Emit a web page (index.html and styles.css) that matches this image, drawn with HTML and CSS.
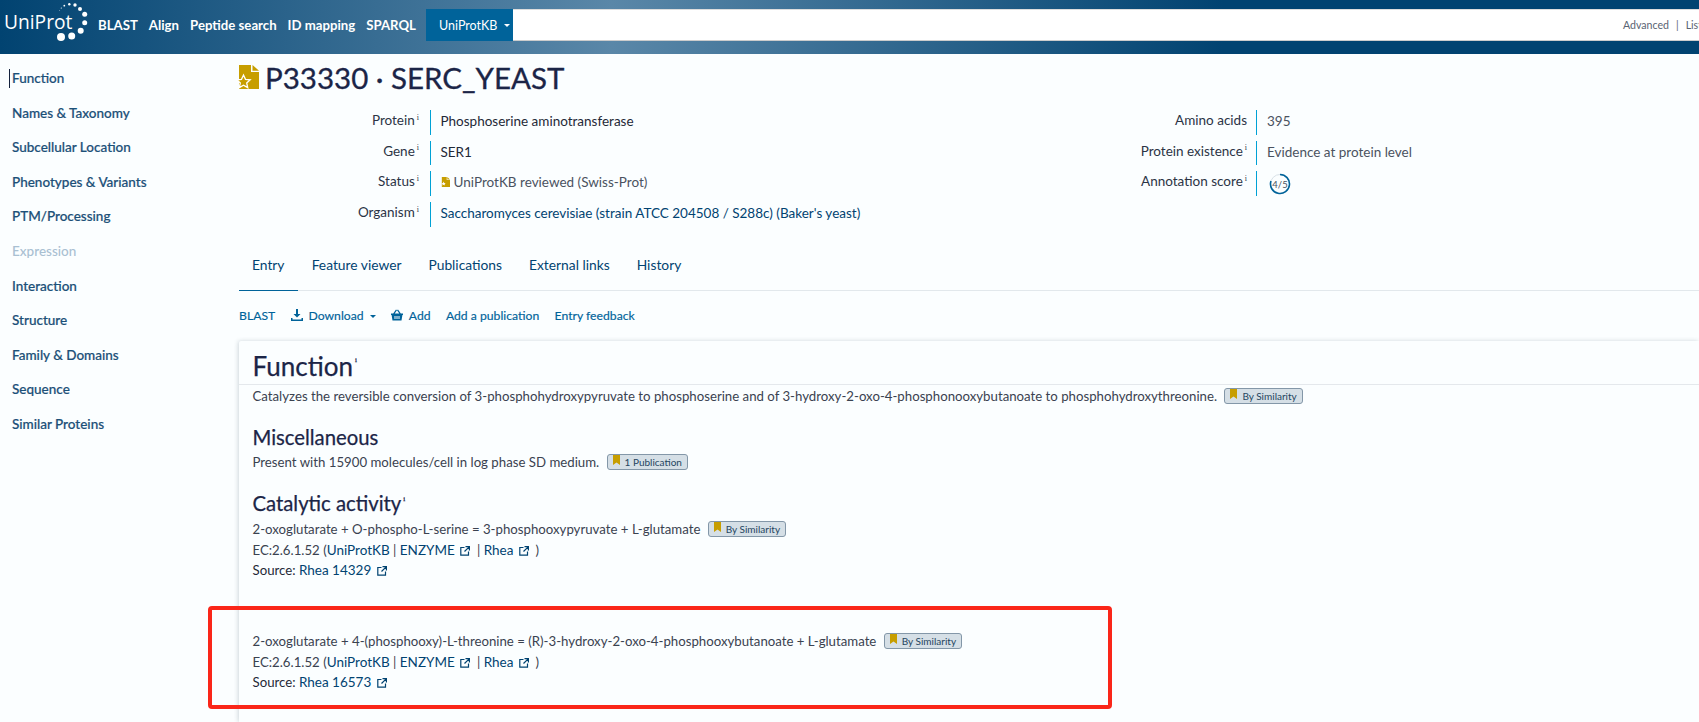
FILE: index.html
```html
<!DOCTYPE html>
<html lang="en">
<head>
<meta charset="utf-8">
<title>P33330 · SERC_YEAST</title>
<link rel="stylesheet" href="styles.css">
</head>
<body>
<header class="topbar">
  <a class="logo" href="#">
    <svg width="90" height="44" viewBox="0 0 90 44">
      <text x="4" y="28.500" class="logo-text">UniProt</text>
      <g fill="#fff">
        <circle cx="61" cy="37" r="4"/><circle cx="71.7" cy="36" r="3.500"/><circle cx="80.7" cy="30.700" r="3"/>
        <circle cx="84.7" cy="22.700" r="2.500"/><circle cx="84.7" cy="14.300" r="2.500"/><circle cx="80" cy="9" r="2"/>
        <circle cx="75" cy="5" r="1.700"/><circle cx="69.3" cy="4.300" r="1.200"/><circle cx="64.3" cy="5.700" r="0.900"/>
        <circle cx="61.3" cy="8" r="0.600"/><circle cx="59.7" cy="10.700" r="0.400"/>
      </g>
    </svg>
  </a>
  <nav class="topnav">
    <a href="#">BLAST</a><a href="#">Align</a><a href="#">Peptide search</a><a href="#">ID mapping</a><a href="#">SPARQL</a>
  </nav>
  <div class="search">
    <span class="search-select">UniProtKB<i class="caret caret-white"></i></span>
    <div class="search-input"><span>Advanced</span><span class="sep">|</span><span>List</span></div>
  </div>
</header>

<div class="page">
  <aside class="sidebar">
    <a class="side-link active" href="#">Function</a>
    <a class="side-link" href="#">Names &amp; Taxonomy</a>
    <a class="side-link" href="#">Subcellular Location</a>
    <a class="side-link" href="#">Phenotypes &amp; Variants</a>
    <a class="side-link" href="#">PTM/Processing</a>
    <a class="side-link disabled" href="#">Expression</a>
    <a class="side-link" href="#">Interaction</a>
    <a class="side-link" href="#">Structure</a>
    <a class="side-link" href="#">Family &amp; Domains</a>
    <a class="side-link" href="#">Sequence</a>
    <a class="side-link" href="#">Similar Proteins</a>
  </aside>

  <main class="main">
    <h1 class="title">
      <svg class="doc-icon" viewBox="0 0 22 24">
        <path fill="#c79e00" d="M2 0h12v7h8v17H2z"/><path fill="#c79e00" d="M15.500 0L22 5.800h-6.500z"/>
        <path fill="#c79e00" stroke="#fff" stroke-width="1.300" d="M6.500 10l2 4.300 4.700.5-3.500 3.200 1 4.600-4.200-2.400-4.200 2.400 1-4.600L-.200 14.800l4.700-.5z"/>
      </svg>
      P33330 · SERC_YEAST
    </h1>

    <section class="summary">
      <dl class="info info-left">
        <div class="info-row"><dt>Protein<sup>i</sup></dt><dd>Phosphoserine aminotransferase</dd></div>
        <div class="info-row"><dt>Gene<sup>i</sup></dt><dd>SER1</dd></div>
        <div class="info-row"><dt>Status<sup>i</sup></dt><dd class="muted"><svg class="doc-small" viewBox="0 0 22 24"><path fill="#c79e00" d="M2 0h12v7h8v17H2z"/><path fill="#c79e00" d="M15.500 0L22 5.800h-6.500z"/><path fill="#fff" d="M6.500 11l1.500 3.300 3.600.4-2.700 2.400.8 3.500-3.200-1.800-3.200 1.800.8-3.500-2.700-2.400 3.600-.4z"/></svg>UniProtKB reviewed (Swiss-Prot)</dd></div>
        <div class="info-row"><dt>Organism<sup>i</sup></dt><dd><a href="#">Saccharomyces cerevisiae (strain ATCC 204508 / S288c) (Baker's yeast)</a></dd></div>
      </dl>
      <dl class="info info-right">
        <div class="info-row"><dt>Amino acids</dt><dd class="muted">395</dd></div>
        <div class="info-row"><dt>Protein existence<sup>i</sup></dt><dd class="muted">Evidence at protein level</dd></div>
        <div class="info-row"><dt>Annotation score<sup>i</sup></dt><dd>
          <span class="score"><svg viewBox="0 0 22 22" width="22" height="22"><circle cx="11" cy="11" r="9.500" fill="none" stroke="#d9e2e8" stroke-width="1"/><path d="M11 1.500A9.500 9.500 0 1 1 1.960 8.060" fill="none" stroke="#00639a" stroke-width="1.600"/></svg><b>4/5</b></span>
        </dd></div>
      </dl>
    </section>

    <nav class="tabs">
      <a class="tab tab-active" href="#">Entry</a>
      <a class="tab" href="#">Feature viewer</a>
      <a class="tab" href="#">Publications</a>
      <a class="tab" href="#">External links</a>
      <a class="tab" href="#">History</a>
    </nav>

    <div class="actions">
      <a href="#">BLAST</a>
      <a href="#"><svg class="act-icon" viewBox="0 0 12 12"><path fill="#00639a" d="M5 0h2v5h2.500L6 8.500 2.500 5H5zM0 9h1.500v1.500h9V9H12v3H0z"/></svg>Download<i class="caret caret-blue"></i></a>
      <a href="#"><svg class="act-icon" viewBox="0 0 12 12"><path fill="#00639a" d="M0 4.500h2.200L5 .5l1 .7L3.700 4.500h4.600L6 1.200l1-.7 2.800 4H12V6h-.6L10.500 11.500h-9L.6 6H0zM3.500 7v3h1V7zm2 0v3h1V7zm2 0v3h1V7z"/></svg>Add</a>
      <a href="#">Add a publication</a>
      <a href="#">Entry feedback</a>
    </div>

    <article class="card">
      <h2 class="card-title">Function<sup>i</sup></h2>
      <p class="line desc">Catalyzes the reversible conversion of 3-phosphohydroxypyruvate to phosphoserine and of 3-hydroxy-2-oxo-4-phosphonooxybutanoate to phosphohydroxythreonine. <span class="evidence"><svg class="mark" viewBox="0 0 7 10"><path fill="#c79e00" d="M0 0h7v10L3.500 7.500 0 10z"/></svg>By Similarity</span></p>

      <h3 class="sub misc">Miscellaneous</h3>
      <p class="line">Present with 15900 molecules/cell in log phase SD medium. <span class="evidence"><svg class="mark" viewBox="0 0 7 10"><path fill="#c79e00" d="M0 0h7v10L3.500 7.500 0 10z"/></svg>1 Publication</span></p>

      <h3 class="sub cat">Catalytic activity<sup>i</sup></h3>

      <div class="reaction">
        <p class="line">2-oxoglutarate + O-phospho-L-serine = 3-phosphooxypyruvate + L-glutamate <span class="evidence"><svg class="mark" viewBox="0 0 7 10"><path fill="#c79e00" d="M0 0h7v10L3.500 7.500 0 10z"/></svg>By Similarity</span></p>
        <p class="line">EC:2.6.1.52 (<a href="#">UniProtKB</a> | <a href="#">ENZYME</a> <svg class="ext" viewBox="0 0 10 10"><path fill="none" stroke="#014371" stroke-width="1.200" d="M4.500 1.500H.8v7.700h7.700V5.500M5.500.6h3.900v3.900M9.200.8L4.500 5.500"/></svg> &nbsp;| <a href="#">Rhea</a> <svg class="ext" viewBox="0 0 10 10"><path fill="none" stroke="#014371" stroke-width="1.200" d="M4.500 1.500H.8v7.700h7.700V5.500M5.500.6h3.900v3.900M9.200.8L4.500 5.500"/></svg> &nbsp;)</p>
        <p class="line line-dark">Source: <a href="#">Rhea 14329</a> <svg class="ext" viewBox="0 0 10 10"><path fill="none" stroke="#014371" stroke-width="1.200" d="M4.500 1.500H.8v7.700h7.700V5.500M5.500.6h3.900v3.900M9.200.8L4.500 5.500"/></svg></p>
      </div>

      <div class="reaction second">
        <p class="line">2-oxoglutarate + 4-(phosphooxy)-L-threonine = (R)-3-hydroxy-2-oxo-4-phosphooxybutanoate + L-glutamate <span class="evidence"><svg class="mark" viewBox="0 0 7 10"><path fill="#c79e00" d="M0 0h7v10L3.500 7.500 0 10z"/></svg>By Similarity</span></p>
        <p class="line">EC:2.6.1.52 (<a href="#">UniProtKB</a> | <a href="#">ENZYME</a> <svg class="ext" viewBox="0 0 10 10"><path fill="none" stroke="#014371" stroke-width="1.200" d="M4.500 1.500H.8v7.700h7.700V5.500M5.500.6h3.900v3.900M9.200.8L4.500 5.500"/></svg> &nbsp;| <a href="#">Rhea</a> <svg class="ext" viewBox="0 0 10 10"><path fill="none" stroke="#014371" stroke-width="1.200" d="M4.500 1.500H.8v7.700h7.700V5.500M5.500.6h3.900v3.900M9.200.8L4.500 5.500"/></svg> &nbsp;)</p>
        <p class="line line-dark">Source: <a href="#">Rhea 16573</a> <svg class="ext" viewBox="0 0 10 10"><path fill="none" stroke="#014371" stroke-width="1.200" d="M4.500 1.500H.8v7.700h7.700V5.500M5.500.6h3.900v3.900M9.200.8L4.500 5.500"/></svg></p>
      </div>
    </article>
  </main>
</div>
<div class="highlight"></div>
</body>
</html>
```
FILE: styles.css
```css
* { box-sizing: border-box; }
html, body { margin: 0; height: 722px; overflow: hidden; }
body { background: #fbfeff; font-family: Lato, "Open Sans", sans-serif; font-size: 13.5px; color: #2b3445; position: relative; }
a { color: #014371; text-decoration: none; }

.topbar { height: 54px; padding-bottom: 4px; display: flex; align-items: center; background: linear-gradient(90deg, #014371 0%, #5a87a8 36%, #014371 72%, #014371 100%); }
.logo { width: 98px; flex: none; height: 44px; display: block; margin-top: -6px; }
.logo-text { font-family: "Open Sans", sans-serif; font-size: 19.200px; fill: #fff; font-weight: 400; }
.topnav { display: flex; gap: 11px; flex: none; width: 328px; white-space: nowrap; }
.topnav a { color: #fff; font-weight: 700; font-size: 13.200px; }
.search { flex: 1; display: flex; height: 32px; }
.search-select { width: 87px; flex: none; background: #00639a; color: #fff; font-size: 12.500px; display: flex; align-items: center; padding-left: 13px; }
.caret { display: inline-block; border-left: 3px solid transparent; border-right: 3px solid transparent; }
.caret-white { border-top: 3.500px solid #fff; margin-left: 7px; }
.caret-blue { border-top: 3.500px solid #00639a; margin-left: 6px; vertical-align: 2px; }
.search-input { flex: 1; background: #fff; border-top: 1px solid #ddd; border-bottom: 1px solid #ccc; display: flex; justify-content: flex-end; align-items: center; gap: 7px; font-size: 10.600px; color: #5a6472; margin-right: -3px; }

.page { display: flex; width: 1699px; }
.sidebar { width: 239px; flex: none; padding: 7px 0 0 8px; display: flex; flex-direction: column; }
.side-link { height: 34.600px; line-height: 34.600px; padding-left: 4px; font-size: 13.500px; font-weight: 500; -webkit-text-stroke: 0.200px #1c5078; color: #1c5078; position: relative; }
.side-link.active::before { content: ""; position: absolute; left: 1px; top: 8px; height: 19px; width: 1px; background: #14213d; }
.side-link.disabled { color: #a9c0d2; -webkit-text-stroke: 0; }

.main { flex: 1; min-width: 0; }
.title { margin: 5px 0 0 -2px; height: 36px; display: flex; align-items: center; gap: 6px; font-weight: 400; font-size: 29.500px; color: #1b2547; -webkit-text-stroke: 0.300px #1b2547; }
.doc-icon { width: 22px; height: 24px; flex: none; overflow: visible; }
.doc-small { width: 9px; height: 10px; margin-right: 4px; }

.summary { display: flex; margin-top: 15px; }
.info { margin: 0; display: flex; flex-direction: column; }
.info-left { width: 1008px; gap: 6.200px; }
.info-right { gap: 6.200px; }
.info-row { display: flex; height: 24.500px; }
dt { text-align: right; padding-right: 9px; border-right: 1px solid #00a1d5; font-size: 13.500px; color: #2b3445; line-height: 20px; }
.info-left dt { width: 191.500px; padding-right: 10.500px; }
.info-right dt { width: 0; white-space: nowrap; direction: rtl; }
dt sup, .card-title sup, .sub sup { font-size: 8px; margin-left: 2px; line-height: 0; font-family: "Liberation Serif", serif; }
dd { margin: 0; padding-left: 10px; line-height: 22px; font-size: 13.500px; color: #1f2937; }
dd.muted { color: #4a5260; }
dd a { color: #014371; font-weight: 400; }

.score { position: relative; display: inline-flex; width: 22px; height: 22px; margin: 2px 0 0 2px; align-items: center; justify-content: center; }
.score svg { position: absolute; inset: 0; }
.score b { font-weight: 400; font-size: 9.500px; color: #4a5260; line-height: 1; }

.tabs { display: flex; margin-top: 23.400px; height: 41px; border-bottom: 1px solid #e2e8ec; }
.tab { padding: 0 13.500px; line-height: 30px; height: 41px; font-size: 13.800px; }
.tab-active { border-bottom: 1px solid #00639a; padding: 0 13.700px 0 13px; }
.actions { display: flex; align-items: center; gap: 15.300px; height: 20px; margin-top: 15px; }
.actions a { color: #00639a; font-size: 12.200px; -webkit-text-stroke: 0.150px #00639a; }
.act-icon { width: 12px; height: 12px; margin-right: 6px; vertical-align: -1px; }

.card { margin-top: 15px; padding: 0 0 0 13.500px; box-shadow: -1px 0 4px rgba(60,80,100,.22); border-radius: 2px 0 0 0; height: 381px; }
.card-title { margin: 0 0 0 -13.500px; padding: 7px 0 0 13.500px; height: 44px; border-bottom: 1px solid #e4e8ec; font-weight: 400; font-size: 26px; line-height: 36px; color: #1b2547; -webkit-text-stroke: 0.250px #1b2547; }
.card-title sup { font-size: 7px; vertical-align: 14px; }
.line { margin: 0; line-height: 20.700px; font-size: 13.230px; color: #3a4250; white-space: nowrap; }
.line-dark { color: #1f2937; }
.desc { margin-top: 1px; }
.sub { margin: 0; font-weight: 400; font-size: 20.300px; line-height: 28px; color: #1b2547; -webkit-text-stroke: 0.250px #1b2547; }
.sub sup { font-size: 7px; vertical-align: 10px; }
.misc { margin-top: 16px; margin-bottom: 1px; }
.cat { margin-top: 16.500px; margin-bottom: 2px; }
.second { margin-top: 50px; }
.evidence { display: inline-flex; vertical-align: top; align-items: flex-end; height: 16px; margin: 2px 0 0 4px; padding: 0 5px 1px 5px; background: #d5dfe6; border: 1px solid #8397a8; border-radius: 3px; font-size: 10px; line-height: 12px; color: #24455f; }
.mark { width: 7px; height: 10px; margin-right: 5px; align-self: flex-start; }
.ext { width: 10px; height: 10px; margin-left: 2px; vertical-align: -1px; }
.line a { color: #014371; font-size: 13.500px; }

.highlight { position: absolute; left: 208px; top: 606px; width: 904px; height: 103px; border: 4.500px solid #fa2619; border-radius: 4px; }
```
